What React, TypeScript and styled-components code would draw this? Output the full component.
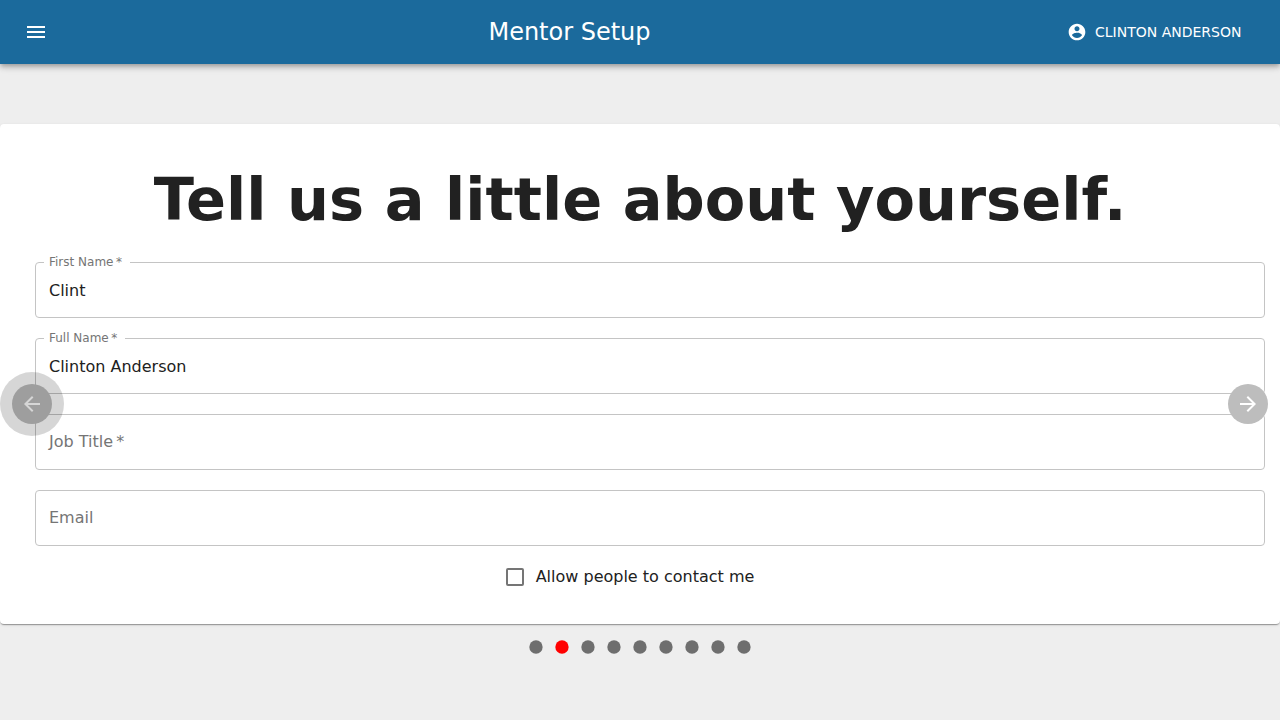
import React, { useId, useState } from "react";
import styled, { createGlobalStyle } from "styled-components";

const GlobalStyle = createGlobalStyle`
  *, *::before, *::after { box-sizing: border-box; }
  body {
    margin: 0;
    min-height: 100vh;
    background: #eeeeee;
    color: #212121;
    font-family: "DejaVu Sans", Verdana, sans-serif;
    font-size: 16px;
  }
  button, input { font: inherit; color: inherit; }
  button { border: 0; padding: 0; background: none; cursor: pointer; }
`;

const AppBar = styled.header`
  position: relative;
  display: flex;
  align-items: center;
  height: 64px;
  padding: 0 24px 0 12px;
  background: #1b6a9c;
  color: #fff;
  box-shadow: 0 2px 4px -1px rgba(0, 0, 0, 0.2), 0 4px 5px 0 rgba(0, 0, 0, 0.14),
    0 1px 10px 0 rgba(0, 0, 0, 0.12);
`;

const MenuButton = styled.button`
  display: flex;
  padding: 12px;
  margin-right: 16px;
`;

const BarTitle = styled.div`
  flex: 1;
  text-align: center;
  font-size: 24px;
  line-height: 32px;
`;

const AccountButton = styled.button`
  display: flex;
  align-items: center;
  gap: 8px;
  min-width: 193px;
  padding: 6px 8px 6px 4px;
  font-size: 14px;
  line-height: 24px;
  text-transform: uppercase;
`;

const Icon = styled.svg<{ $size: number }>`
  display: block;
  flex: none;
  width: ${(p) => p.$size}px;
  height: ${(p) => p.$size}px;
  fill: currentColor;
`;

const Stage = styled.main`
  position: relative;
  margin-top: 60px;
`;

const Card = styled.section`
  padding: 40px 15px 36px 35px;
  background: #fff;
  border-radius: 4px;
  box-shadow: 0 2px 1px -1px rgba(0, 0, 0, 0.2), 0 1px 1px 0 rgba(0, 0, 0, 0.14),
    0 1px 3px 0 rgba(0, 0, 0, 0.12);
`;

const Heading = styled.h1`
  margin: 0 -15px 26px -35px;
  text-align: center;
  font-size: 59px;
  font-weight: 700;
  line-height: 72px;
`;

const Form = styled.form`
  display: flex;
  flex-direction: column;
  gap: 20px;
`;

const Field = styled.div`
  position: relative;
  height: 56px;
`;

const FieldInput = styled.input`
  display: block;
  width: 100%;
  height: 100%;
  padding: 0 13px;
  border: 1px solid #c4c4c4;
  border-radius: 4px;
  background: transparent;
  outline: none;
  &:focus { border-color: #1b6a9c; }
`;

const FieldLabel = styled.label<{ $raised: boolean }>`
  position: absolute;
  left: 9px;
  top: ${(p) => (p.$raised ? "-8px" : "18px")};
  padding: 0 8px 0 5px;
  background: #fff;
  color: #757575;
  font-size: ${(p) => (p.$raised ? 12 : 16)}px;
  line-height: ${(p) => (p.$raised ? 16 : 20)}px;
  pointer-events: none;
`;

const CheckLabel = styled.label`
  display: flex;
  align-items: center;
  align-self: center;
  gap: 12px;
  height: 22px;
  margin-right: 40px;
  line-height: 22px;
`;

const CheckBox = styled.input`
  appearance: none;
  width: 18px;
  height: 18px;
  margin: 0;
  border: 2px solid #757575;
  border-radius: 2px;
  &:checked { background: #1b6a9c; border-color: #1b6a9c; }
`;

const Steps = styled.nav`
  display: flex;
  justify-content: center;
  gap: 6px;
  height: 60px;
  padding-top: 13px;
`;

const StepDot = styled.button<{ $active: boolean }>`
  width: 20px;
  height: 20px;
  color: ${(p) => (p.$active ? "#ff0000" : "#6e6e6e")};
`;

const ArrowButton = styled.button<{ $side: "left" | "right"; $focused?: boolean }>`
  position: absolute;
  top: 50%;
  ${(p) => p.$side}: 12px;
  display: flex;
  align-items: center;
  justify-content: center;
  width: 40px;
  height: 40px;
  margin-top: -20px;
  border-radius: 50%;
  background: #bdbdbd;
  color: #fff;
  &::after {
    content: "";
    display: ${(p) => (p.$focused ? "block" : "none")};
    position: absolute;
    inset: -12px;
    border-radius: 50%;
    background: rgba(0, 0, 0, 0.16);
  }
`;

function TextField(props: { label: string; initial?: string; required?: boolean; type?: string }) {
  const id = useId();
  const [value, setValue] = useState(props.initial ?? "");
  const [focused, setFocused] = useState(false);
  return (
    <Field>
      <FieldInput
        id={id}
        type={props.type ?? "text"}
        value={value}
        required={props.required}
        onChange={(e) => setValue(e.target.value)}
        onFocus={() => setFocused(true)}
        onBlur={() => setFocused(false)}
      />
      <FieldLabel htmlFor={id} $raised={focused || value !== ""}>
        {props.label}
        {props.required && "\u2009*"}
      </FieldLabel>
    </Field>
  );
}

const STEP_COUNT = 9;

export default function App() {
  const [step, setStep] = useState(1);
  const [contact, setContact] = useState(false);
  return (
    <>
      <GlobalStyle />
      <AppBar>
        <MenuButton type="button" aria-label="Menu">
          <Icon $size={24} viewBox="0 0 24 24">
            <path d="M3 18h18v-2H3v2zm0-5h18v-2H3v2zm0-7v2h18V6H3z" />
          </Icon>
        </MenuButton>
        <BarTitle>Mentor Setup</BarTitle>
        <AccountButton type="button">
          <Icon $size={20} viewBox="0 0 24 24">
            <path d="M12 2C6.480 2 2 6.480 2 12s4.480 10 10 10 10-4.480 10-10S17.520 2 12 2zm0 3c1.660 0 3 1.340 3 3s-1.340 3-3 3-3-1.340-3-3 1.340-3 3-3zm0 14.200c-2.500 0-4.710-1.280-6-3.220.030-1.990 4-3.080 6-3.080 1.990 0 5.970 1.090 6 3.080-1.290 1.940-3.500 3.220-6 3.220z" />
          </Icon>
          Clinton Anderson
        </AccountButton>
      </AppBar>
      <Stage>
        <Card>
          <Heading>Tell us a little about yourself.</Heading>
          <Form onSubmit={(e) => e.preventDefault()}>
            <TextField label="First Name" initial="Clint" required />
            <TextField label="Full Name" initial="Clinton Anderson" required />
            <TextField label="Job Title" required />
            <TextField label="Email" type="email" />
            <CheckLabel>
              <CheckBox
                type="checkbox"
                checked={contact}
                onChange={(e) => setContact(e.target.checked)}
              />
              Allow people to contact me
            </CheckLabel>
          </Form>
        </Card>
        <Steps aria-label="Setup steps">
          {Array.from({ length: STEP_COUNT }, (_, i) => (
            <StepDot
              key={i}
              type="button"
              $active={i === step}
              aria-label={`Step ${i + 1}`}
              onClick={() => setStep(i)}
            >
              <Icon $size={20} viewBox="0 0 24 24">
                <circle cx="12" cy="12" r="8" />
              </Icon>
            </StepDot>
          ))}
        </Steps>
        <ArrowButton
          type="button"
          $side="left"
          $focused
          aria-label="Back"
          onClick={() => setStep(Math.max(0, step - 1))}
        >
          <Icon $size={24} viewBox="0 0 24 24">
            <path d="M20 11H7.830l5.590-5.590L12 4l-8 8 8 8 1.410-1.410L7.830 13H20v-2z" />
          </Icon>
        </ArrowButton>
        <ArrowButton
          type="button"
          $side="right"
          aria-label="Next"
          onClick={() => setStep(Math.min(STEP_COUNT - 1, step + 1))}
        >
          <Icon $size={24} viewBox="0 0 24 24">
            <path d="M12 4l-1.410 1.410L16.170 11H4v2h12.170l-5.580 5.590L12 20l8-8z" />
          </Icon>
        </ArrowButton>
      </Stage>
    </>
  );
}
